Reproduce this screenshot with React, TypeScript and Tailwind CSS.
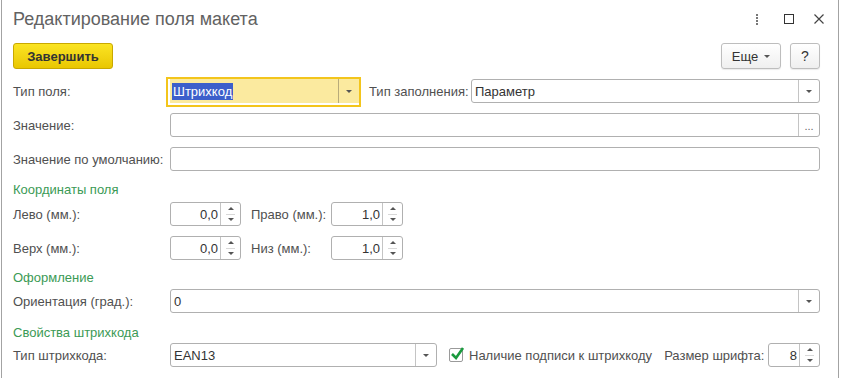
import React from 'react';

const font = { fontFamily: '"Liberation Sans", Arial, sans-serif' };

function DownTri() {
    return <span className="block w-0 h-0 border-x-[3px] border-t-[3px] border-x-transparent border-t-[#555]" />;
}

function UpTri() {
    return <span className="block w-0 h-0 border-x-[3px] border-b-[3px] border-x-transparent border-b-[#555]" />;
}

function Label({ text, w }: { text: string; w: string }) {
    return <div className={`${w} shrink-0 text-[13px] text-[#505050] leading-none`}>{text}</div>;
}

function Combo({ value, w, btn = 'drop' }: { value?: string; w?: string; btn?: 'drop' | 'dots' | 'none' }) {
    return (
        <div className={`${w ?? 'flex-1'} h-[24px] flex border border-[#b0b0b0] rounded-[3px] bg-white`}>
            <div className="flex-1 flex items-center px-[3px] text-[13px] text-[#333] leading-none">{value}</div>
            {btn === 'drop' && (
                <div className="w-[21px] border-l border-[#c4c4c4] flex items-center justify-center">
                    <DownTri />
                </div>
            )}
            {btn === 'dots' && (
                <div className="w-[21px] border-l border-[#c4c4c4] flex items-center justify-center text-[11px] text-[#666] leading-none pt-[3px]">...</div>
            )}
        </div>
    );
}

function Spin({ value, w }: { value: string; w: string }) {
    return (
        <div className={`${w} h-[24px] flex border border-[#b0b0b0] rounded-[3px] bg-white`}>
            <div className="flex-1 flex items-center justify-end pr-[2px] text-[13px] text-[#333] leading-none">{value}</div>
            <div className="w-[20px] border-l border-[#c4c4c4] flex flex-col">
                <div className="flex-1 flex items-center justify-center"><UpTri /></div>
                <div className="h-px bg-[#d8d8d8] mx-[5px]" />
                <div className="flex-1 flex items-center justify-center"><DownTri /></div>
            </div>
        </div>
    );
}

function Group({ text, className }: { text: string; className: string }) {
    return <div className={`h-[18px] flex items-center text-[13px] text-[#3b9a55] leading-none ${className}`}>{text}</div>;
}

export default function App() {
    return (
        <div className="w-[847px] h-[378px] bg-white overflow-hidden pl-px" style={font}>
            <div className="w-[838px] h-full border-x border-[#a3a3a3] pl-[11px] pr-[18px]">
                {/* header */}
                <div className="h-[38px] flex items-center justify-between">
                    <div className="text-[18px] text-[#626262] leading-none">Редактирование поля макета</div>
                    <div className="flex items-center -mr-[4px]">
                        <div className="flex flex-col gap-[1px] mr-[26px]">
                            <span className="w-[2px] h-[2px] bg-[#777]" />
                            <span className="w-[2px] h-[2px] bg-[#777]" />
                            <span className="w-[2px] h-[2px] bg-[#777]" />
                            <span className="w-[2px] h-[2px] bg-[#777]" />
                        </div>
                        <div className="w-[10px] h-[10px] border-[1.5px] border-[#333] mr-[20px]" />
                        <svg width="10" height="10" viewBox="0 0 10 10">
                            <path d="M0.5 0.5 L9.5 9.5 M9.5 0.5 L0.5 9.5" stroke="#444" strokeWidth="1.2" />
                        </svg>
                    </div>
                </div>

                {/* command bar */}
                <div className="mt-[5px] h-[26px] flex items-center">
                    <button className="w-[100px] h-[26px] rounded-[3px] border border-[#c9a800] bg-gradient-to-b from-[#fbe421] to-[#e9c700] text-[13px] font-bold text-[#333] leading-none">Завершить</button>
                    <div className="flex-1" />
                    <button className="w-[60px] h-[26px] rounded-[3px] border border-[#bdbdbd] bg-gradient-to-b from-white to-[#efefef] shadow-[0_1px_1px_rgba(0,0,0,0.08)] flex items-center justify-center gap-[6px] text-[13px] text-[#333] leading-none">
                        <span>Еще</span>
                        <DownTri />
                    </button>
                    <button className="ml-[9px] w-[30px] h-[26px] rounded-[3px] border border-[#bdbdbd] bg-gradient-to-b from-white to-[#efefef] shadow-[0_1px_1px_rgba(0,0,0,0.08)] text-[14px] text-[#333] leading-none">?</button>
                </div>

                {/* row 1 */}
                <div className="mt-[10px] h-[24px] flex items-center">
                    <Label text="Тип поля:" w="w-[153px]" />
                    <div className="h-[30px] border-2 border-[#f3c51c] pl-[2px] pt-0 pb-[2px] flex mt-[2px]">
                        <div className="w-[189px] h-[24px] flex bg-[#fbea9f]">
                            <div className="flex-1 flex items-center pl-[2px]">
                                <span className="bg-[#3c5fcb] text-white text-[13px] leading-[17px] px-px">Штрихкод</span>
                            </div>
                            <div className="w-[21px] border-l border-[#b8ab7a] flex items-center justify-center">
                                <DownTri />
                            </div>
                        </div>
                    </div>
                    <Label text="Тип заполнения:" w="w-[102px] ml-[8px]" />
                    <Combo value="Параметр" />
                </div>

                {/* row 2 */}
                <div className="mt-[10px] h-[24px] flex items-center">
                    <Label text="Значение:" w="w-[157px]" />
                    <Combo btn="dots" />
                </div>

                {/* row 3 */}
                <div className="mt-[10px] h-[24px] flex items-center">
                    <Label text="Значение по умолчанию:" w="w-[157px]" />
                    <Combo btn="none" />
                </div>

                <Group text="Координаты поля" className="mt-[9px]" />

                <div className="mt-[4px] h-[24px] flex items-center">
                    <Label text="Лево (мм.):" w="w-[157px]" />
                    <Spin value="0,0" w="w-[71px]" />
                    <Label text="Право (мм.):" w="w-[80px] ml-[10px]" />
                    <Spin value="1,0" w="w-[72px]" />
                </div>

                <div className="mt-[10px] h-[24px] flex items-center">
                    <Label text="Верх (мм.):" w="w-[157px]" />
                    <Spin value="0,0" w="w-[71px]" />
                    <Label text="Низ (мм.):" w="w-[80px] ml-[10px]" />
                    <Spin value="1,0" w="w-[72px]" />
                </div>

                <Group text="Оформление" className="mt-[8px]" />

                <div className="mt-[3px] h-[24px] flex items-center">
                    <Label text="Ориентация (град.):" w="w-[157px]" />
                    <Combo value="0" />
                </div>

                <Group text="Свойства штрихкода" className="mt-[10px]" />

                <div className="mt-[2px] h-[24px] flex items-center">
                    <Label text="Тип штрихкода:" w="w-[157px]" />
                    <Combo value="EAN13" w="w-[267px]" />
                    <div className="ml-[12px] w-[14px] h-[14px] border border-[#9a9a9a] rounded-[2px] relative">
                        <svg className="absolute -left-[1px] -top-[4px]" width="17" height="17" viewBox="0 0 17 17">
                            <path d="M3 9 L7 13 L14 3" fill="none" stroke="#1a9a3e" strokeWidth="2.6" />
                        </svg>
                    </div>
                    <div className="ml-[6px] text-[13px] text-[#505050] leading-none">Наличие подписи к штрихкоду</div>
                    <div className="ml-[12px] text-[13px] text-[#505050] leading-none">Размер шрифта:</div>
                    <div className="flex-1" />
                    <Spin value="8" w="w-[52px]" />
                </div>
            </div>
        </div>
    );
}
